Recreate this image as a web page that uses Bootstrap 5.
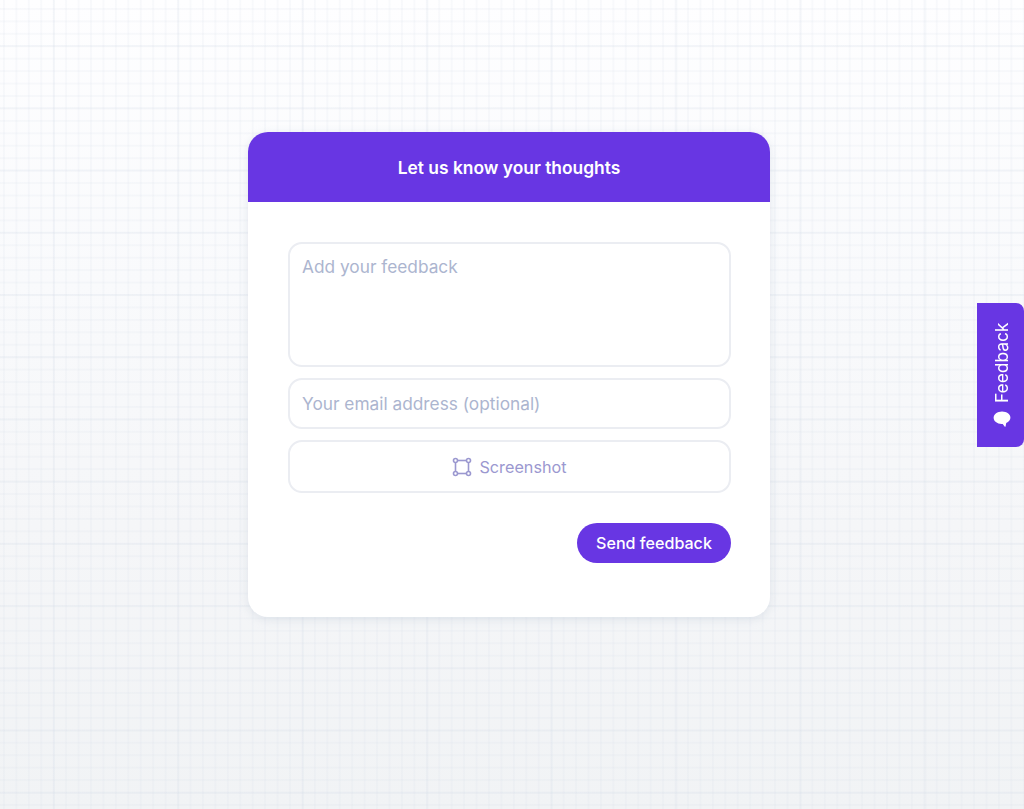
<!DOCTYPE html>
<html lang="en">
<head>
<meta charset="utf-8">
<title>Feedback</title>
<link href="https://cdn.jsdelivr.net/npm/bootstrap@5.3.0/dist/css/bootstrap.min.css" rel="stylesheet">
<style>
html, body { height: 100%; }
body {
  font-family: Inter, "Liberation Sans", sans-serif;
  min-height: 809px;
  overflow: hidden;
  background-color: #f6f7f9;
  background-image:
    linear-gradient(to right, rgba(210,218,230,.14) 1.5px, transparent 1.5px),
    linear-gradient(to bottom, rgba(210,218,230,.14) 1.5px, transparent 1.5px),
    linear-gradient(to right, rgba(210,218,230,.14) 1.5px, transparent 1.5px),
    linear-gradient(to bottom, rgba(210,218,230,.14) 1.5px, transparent 1.5px),
    linear-gradient(to bottom, #fefeff 0%, #f9fafc 35%, #f5f6f8 65%, #f1f3f5 100%);
  background-size: 124.5px 124.5px, 62.25px 62.25px, 12.45px 12.45px, 12.45px 12.45px, 100% 100%;
  background-position: 53px 0, 0 45px, 3px 0, 0 8px, 0 0;
}
.page-wrap { padding: 132px 0 0 248px; }
.fb-card {
  width: 522px;
  height: 485px;
  border-radius: 20px;
  background: #fff;
  box-shadow: 0 2px 10px rgba(190,200,215,.4);
  overflow: hidden;
}
.fb-head {
  height: 70px;
  background: #6836e3;
  font-size: 17.4px;
  font-weight: 600;
  padding-top: 2px;
}
.fb-body { padding: 40px 39px 40px 40px; }
.fb-field {
  width: 443px;
  border: 2px solid #ebedf2;
  border-radius: 14px;
  padding: 0 12px;
  font-size: 17.3px;
  color: #3a3f55;
  outline: 0;
  background: #fff;
}
.fb-field::placeholder { color: #acb5cf; opacity: 1; }
.fb-area { height: 125px; padding-top: 11px; resize: none; display: block; line-height: 24px; }
.fb-input { height: 51px; margin-top: 11px; display: block; }
.fb-shot {
  height: 53px;
  margin-top: 11px;
  color: #9b98d0;
  font-size: 16.2px;
  gap: 7px;
}
.fb-shot span { padding-top: 1px; }
.fb-send {
  width: 154px;
  height: 40px;
  border: 0;
  border-radius: 20px;
  background: #6836e3;
  color: #fff;
  font-size: 16.1px;
  font-weight: 500;
  margin-top: 30px;
}
.fb-tab {
  position: fixed;
  right: 0;
  top: 303px;
  width: 47px;
  height: 144px;
  background: #6836e3;
  border-radius: 8px 0 0 8px;
  color: #fff;
  font-size: 17.4px;
  writing-mode: vertical-rl;
  transform: rotate(180deg);
  padding-top: 19px;
  padding-right: 4px;
  gap: 7px;
}
.fb-tab svg { transform: rotate(180deg); }
</style>
</head>
<body>
<div class="page-wrap">
  <div class="fb-card">
    <div class="fb-head d-flex align-items-center justify-content-center text-white">Let us know your thoughts</div>
    <div class="fb-body d-flex flex-column">
      <textarea class="fb-field fb-area" placeholder="Add your feedback"></textarea>
      <input class="fb-field fb-input" type="text" placeholder="Your email address (optional)">
      <div class="fb-field fb-shot d-flex align-items-center justify-content-center">
        <svg width="20" height="20" viewBox="0 0 20 20" fill="none" stroke="currentColor" stroke-width="1.6">
          <rect x="3.5" y="3.5" width="13" height="13"/>
          <circle cx="3.5" cy="3.5" r="2" fill="#fff"/>
          <circle cx="16.5" cy="3.5" r="2" fill="#fff"/>
          <circle cx="3.5" cy="16.5" r="2" fill="#fff"/>
          <circle cx="16.5" cy="16.5" r="2" fill="#fff"/>
        </svg>
        <span>Screenshot</span>
      </div>
      <div class="d-flex justify-content-end">
        <button type="button" class="fb-send">Send feedback</button>
      </div>
    </div>
  </div>
</div>
<div class="fb-tab d-flex align-items-center">
  <svg width="18" height="18" viewBox="0 0 18 18" fill="currentColor"><path d="M9 1.500C4.300 1.500.6 4.200.6 7.700c0 3.400 3.400 6 8 6.200h1.100l1.900 2.600c.3.400.9.300 1-.2l.6-3.200c2.500-.9 4.200-3 4.200-5.400 0-3.500-3.700-6.200-8.400-6.200z"/></svg>
  <span>Feedback</span>
</div>
<script src="https://cdn.jsdelivr.net/npm/bootstrap@5.3.0/dist/js/bootstrap.bundle.min.js"></script>
</body>
</html>
